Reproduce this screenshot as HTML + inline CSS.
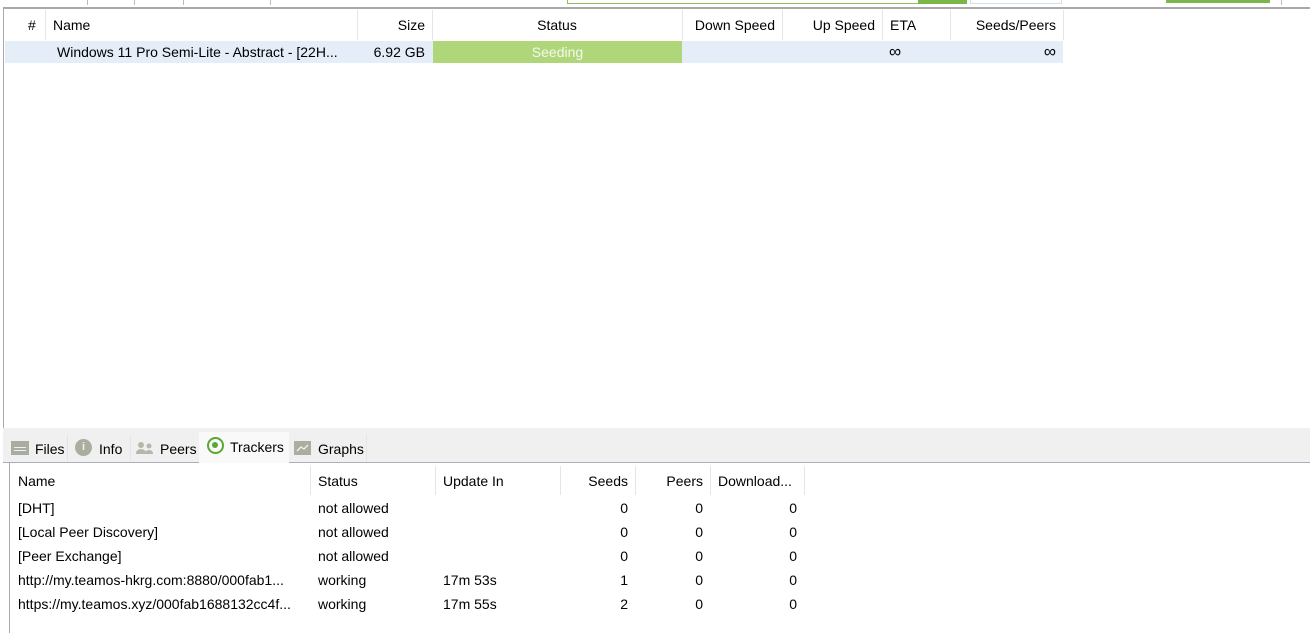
<!DOCTYPE html>
<html><head><style>
body{margin:0;width:1310px;height:623px;background:#fff;font-family:"Liberation Sans",sans-serif;font-size:14px;color:#000;position:relative;overflow:hidden}
.a{position:absolute;white-space:nowrap}
.vl{position:absolute;width:1px;background:#e5e5e5}
.r{text-align:right}
</style></head><body>
<!-- top strip -->
<div class="a" style="left:87px;top:0;width:1px;height:5px;background:#bbb"></div>
<div class="a" style="left:134px;top:0;width:1px;height:5px;background:#bbb"></div>
<div class="a" style="left:183px;top:0;width:1px;height:5px;background:#bbb"></div>
<div class="a" style="left:270px;top:0;width:1px;height:5px;background:#bbb"></div>
<div class="a" style="left:567px;top:0;width:350px;height:3px;border:1px solid #8cc05a;border-top:none"></div>
<div class="a" style="left:918px;top:0;width:49px;height:4px;background:#7ab648"></div>
<div class="a" style="left:970px;top:0;width:90px;height:3px;border:1px solid #cfe0ef;border-top:none"></div>
<div class="a" style="left:1166px;top:0;width:104px;height:3px;background:#7ab648"></div>
<div class="a" style="left:1281px;top:0;width:1px;height:5px;background:#bbb"></div>
<!-- main panel -->
<div class="a" style="left:3px;top:7px;width:1310px;height:419px;border-top:2px solid #a9a9a9;border-left:1px solid #a9a9a9;border-bottom:1px solid #a9a9a9;background:#fff"></div>
<div class="vl" style="left:45px;top:10px;height:30px"></div>
<div class="vl" style="left:357px;top:10px;height:30px"></div>
<div class="vl" style="left:432px;top:10px;height:30px"></div>
<div class="vl" style="left:682px;top:10px;height:30px"></div>
<div class="vl" style="left:782px;top:10px;height:30px"></div>
<div class="vl" style="left:882px;top:10px;height:30px"></div>
<div class="vl" style="left:950px;top:10px;height:30px"></div>
<div class="vl" style="left:1063px;top:10px;height:30px"></div>
<div class="a" style="left:28px;top:17px">#</div>
<div class="a" style="left:53px;top:17px">Name</div>
<div class="a r" style="left:360px;top:17px;width:65px">Size</div>
<div class="a" style="left:432px;top:17px;width:250px;text-align:center">Status</div>
<div class="a r" style="left:682px;top:17px;width:93px">Down Speed</div>
<div class="a r" style="left:782px;top:17px;width:93px">Up Speed</div>
<div class="a" style="left:890px;top:17px">ETA</div>
<div class="a r" style="left:950px;top:17px;width:106px">Seeds/Peers</div>
<div class="a" style="left:5px;top:41px;width:1058px;height:22px;background:#e4edf8"></div>
<div class="a" style="left:57px;top:44px;width:298px;overflow:hidden">Windows 11 Pro Semi-Lite - Abstract - [22H...</div>
<div class="a r" style="left:360px;top:44px;width:65px">6.92 GB</div>
<div class="a" style="left:433px;top:41px;width:249px;height:22px;background:#b0d67a;color:#f4f9ec;text-align:center;line-height:22px">Seeding</div>
<div class="a" style="left:889px;top:42px;font-size:17px">∞</div>
<div class="a r" style="left:950px;top:42px;width:106px;font-size:17px">∞</div>
<!-- tab band -->
<div class="a" style="left:3px;top:428px;width:1310px;height:34px;background:#f0f0f0;border-bottom:1px solid #a9b0bb"></div>
<div class="a" style="left:8px;top:435px;width:59px;height:26px;background:#f0f0f0;border-right:1px solid #e2e2e2"></div>
<div class="a" style="left:11px;top:441px;width:18px;height:14px;background:#a8ad9f"></div>
<div class="a" style="left:14px;top:447px;width:12px;height:1px;background:#f0f0f0"></div>
<div class="a" style="left:14px;top:450px;width:12px;height:1px;background:#f0f0f0"></div>
<div class="a" style="left:35px;top:441px">Files</div>
<div class="a" style="left:75px;top:439px;width:17px;height:17px;border-radius:50%;background:#aaae9f;color:#f0f0f0;font-size:11px;font-weight:bold;text-align:center;line-height:17px">i</div>
<div class="a" style="left:99px;top:441px">Info</div>
<div class="vl" style="left:130px;top:435px;height:26px"></div>
<svg class="a" style="left:135px;top:441px" width="20" height="14"><circle cx="6" cy="4" r="3" fill="#b4b8ab"/><path d="M1 13 Q1 8 6 8 Q11 8 11 13Z" fill="#b4b8ab"/><circle cx="14" cy="5" r="2.5" fill="#b4b8ab"/><path d="M10 13 Q10 9 14 9 Q18 9 18 13Z" fill="#b4b8ab"/></svg>
<div class="a" style="left:160px;top:441px">Peers</div>
<div class="a" style="left:199px;top:432px;width:90px;height:31px;background:#f9f9f9"></div>
<div class="a" style="left:207px;top:437px;width:13px;height:13px;border-radius:50%;border:2px solid #5aa832"></div>
<div class="a" style="left:211px;top:441px;width:6px;height:6px;border-radius:50%;background:#5aa832;margin:1px"></div>
<div class="a" style="left:230px;top:439px">Trackers</div>
<div class="a" style="left:294px;top:441px;width:17px;height:14px;background:#a9ae9f"></div>
<svg class="a" style="left:296px;top:443px" width="13" height="10"><path d="M1 8 L5 4 L8 6 L12 2" stroke="#f0f0f0" fill="none" stroke-width="1.3"/></svg>
<div class="a" style="left:318px;top:441px">Graphs</div>
<div class="vl" style="left:366px;top:435px;height:26px"></div>
<!-- tracker panel -->
<div class="a" style="left:9px;top:463px;width:1310px;height:170px;border-left:1px solid #a9a9a9;background:#fff"></div>
<div class="vl" style="left:310px;top:466px;height:29px"></div>
<div class="vl" style="left:435px;top:466px;height:29px"></div>
<div class="vl" style="left:560px;top:466px;height:29px"></div>
<div class="vl" style="left:635px;top:466px;height:29px"></div>
<div class="vl" style="left:710px;top:466px;height:29px"></div>
<div class="vl" style="left:804px;top:466px;height:29px"></div>
<div class="a" style="left:18px;top:473px">Name</div>
<div class="a" style="left:318px;top:473px">Status</div>
<div class="a" style="left:443px;top:473px">Update In</div>
<div class="a r" style="left:560px;top:473px;width:68px">Seeds</div>
<div class="a r" style="left:635px;top:473px;width:68px">Peers</div>
<div class="a" style="left:718px;top:473px;width:84px;overflow:hidden">Download...</div>

<div class="a" style="left:18px;top:500px">[DHT]</div>
<div class="a" style="left:318px;top:500px">not allowed</div>
<div class="a r" style="left:560px;top:500px;width:68px">0</div>
<div class="a r" style="left:635px;top:500px;width:68px">0</div>
<div class="a r" style="left:710px;top:500px;width:87px">0</div>

<div class="a" style="left:18px;top:524px">[Local Peer Discovery]</div>
<div class="a" style="left:318px;top:524px">not allowed</div>
<div class="a r" style="left:560px;top:524px;width:68px">0</div>
<div class="a r" style="left:635px;top:524px;width:68px">0</div>
<div class="a r" style="left:710px;top:524px;width:87px">0</div>

<div class="a" style="left:18px;top:548px">[Peer Exchange]</div>
<div class="a" style="left:318px;top:548px">not allowed</div>
<div class="a r" style="left:560px;top:548px;width:68px">0</div>
<div class="a r" style="left:635px;top:548px;width:68px">0</div>
<div class="a r" style="left:710px;top:548px;width:87px">0</div>

<div class="a" style="left:18px;top:572px;width:292px;overflow:hidden">http://my.teamos-hkrg.com:8880/000fab1...</div>
<div class="a" style="left:318px;top:572px">working</div>
<div class="a" style="left:443px;top:572px">17m 53s</div>
<div class="a r" style="left:560px;top:572px;width:68px">1</div>
<div class="a r" style="left:635px;top:572px;width:68px">0</div>
<div class="a r" style="left:710px;top:572px;width:87px">0</div>

<div class="a" style="left:18px;top:596px;width:292px;overflow:hidden">https://my.teamos.xyz/000fab1688132cc4f...</div>
<div class="a" style="left:318px;top:596px">working</div>
<div class="a" style="left:443px;top:596px">17m 55s</div>
<div class="a r" style="left:560px;top:596px;width:68px">2</div>
<div class="a r" style="left:635px;top:596px;width:68px">0</div>
<div class="a r" style="left:710px;top:596px;width:87px">0</div>
</body></html>
